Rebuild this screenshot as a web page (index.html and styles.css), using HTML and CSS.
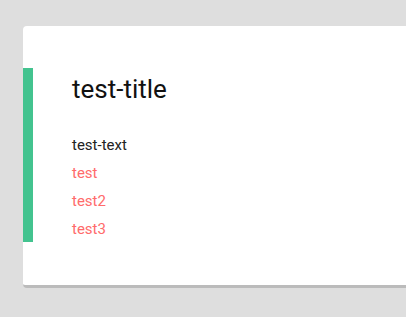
FILE: index.html
```html
<!DOCTYPE html>
<html lang="en">
<head>
  <meta charset="UTF-8" />
  <title>Card</title>
  <link rel="stylesheet" href="styles.css">
</head>
<body>

  <!-- Card -->
  <div class="card">
    <div class="card-body">
      <h2 class="card-title">test-title</h2>
      <p class="card-text">test-text</p>
      <ul class="card-list">
        <li>test</li>
        <li>test2</li>
        <li>test3</li>
      </ul>
    </div>
  </div>

</body>
</html>
```

FILE: styles.css
```css
body {
  font-family: Roboto, "Noto Sans", Arial, sans-serif;
  background: #dedede;
  margin: 0;
  padding: 26px 0 0 23px;
}
.card {
  height: 262px;
  background: #fff;
  border-radius: 4px 0 0 4px;
  border-bottom: 3px solid #bbbbbb;
  padding-top: 42px;
  box-sizing: border-box;
}
.card-body {
  border-left: 10px solid #43c38f;
  padding: 0 0 0 39px;
  height: 174px;
  box-sizing: border-box;
}
.card-title {
  font-size: 26px;
  font-weight: 400;
  color: #111;
  margin: 0;
  padding-top: 7px;
  line-height: 28px;
}
.card-text {
  font-size: 15px;
  color: #222;
  margin: 28px 0 0;
  line-height: 28px;
}
.card-list {
  list-style: none;
  margin: 0;
  padding: 0;
}
.card-list li {
  font-size: 15px;
  color: #ff6b6b;
  line-height: 28px;
}
```
